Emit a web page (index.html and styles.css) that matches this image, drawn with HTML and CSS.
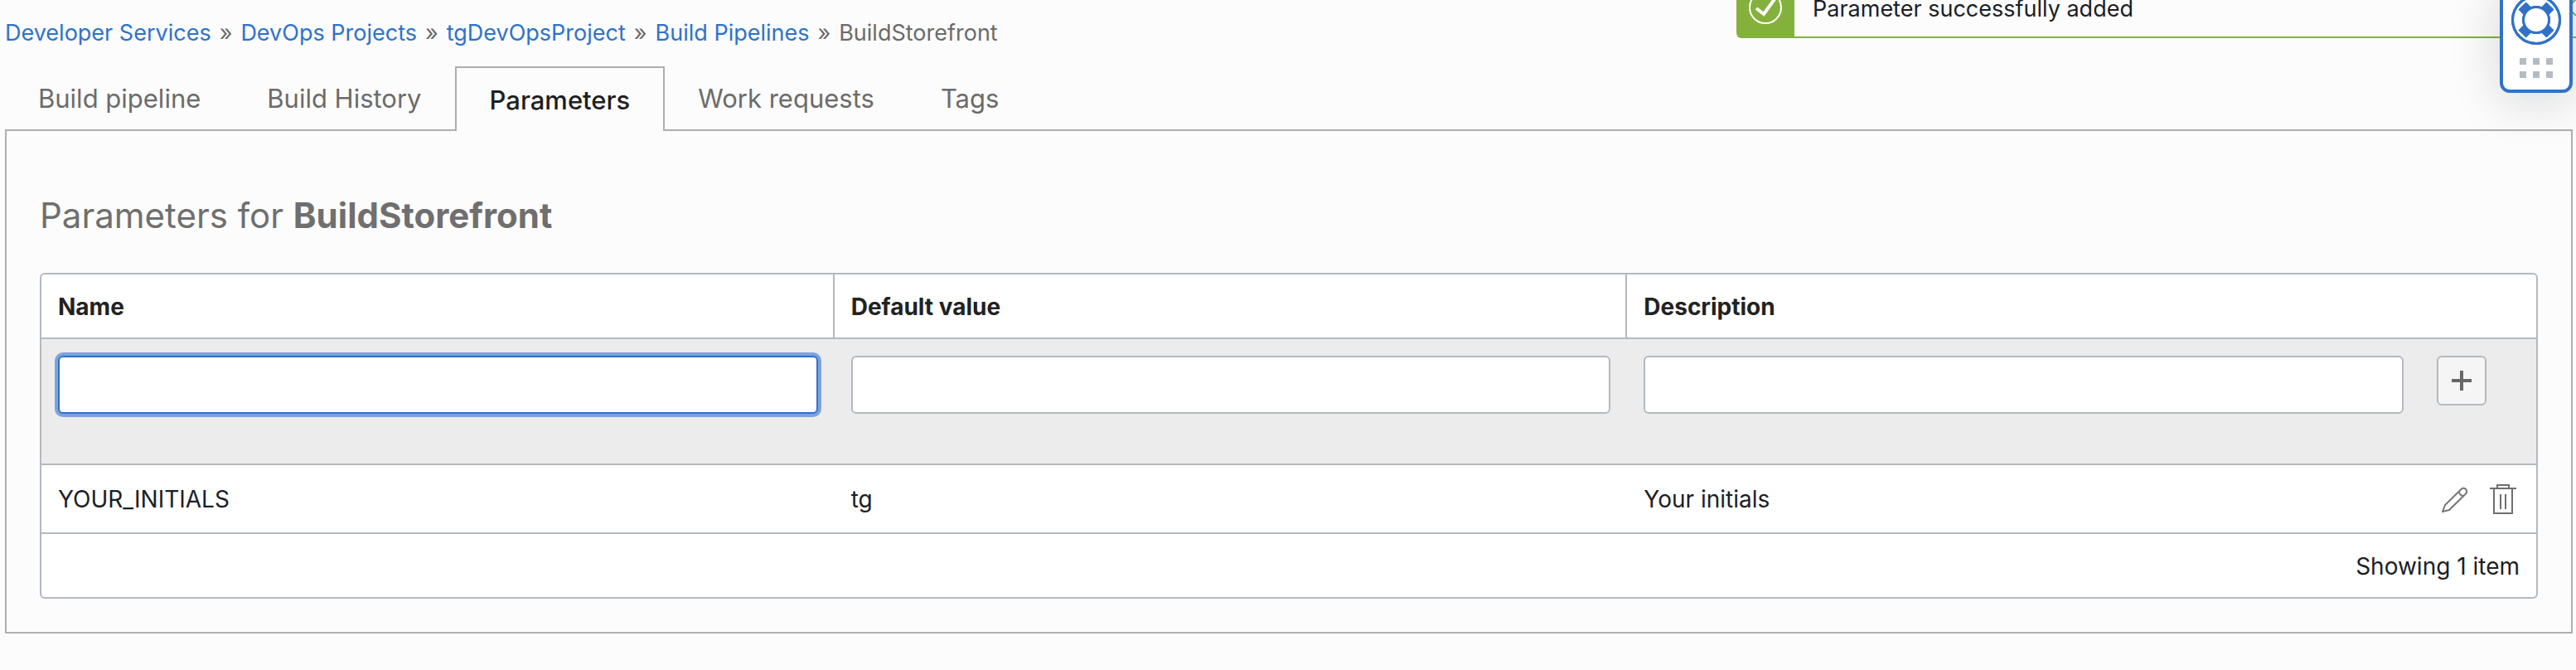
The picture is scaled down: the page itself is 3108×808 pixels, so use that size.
FILE: index.html
```html
<!DOCTYPE html>
<html lang="en">
<head>
<meta charset="utf-8">
<title>Build pipeline parameters</title>
<link rel="stylesheet" href="styles.css">
</head>
<body>
<nav class="breadcrumb" aria-label="Breadcrumb">
  <a href="#">Developer Services</a> <span>»</span>
  <a href="#">DevOps Projects</a> <span>»</span>
  <a href="#">tgDevOpsProject</a> <span>»</span>
  <a href="#">Build Pipelines</a> <span>»</span>
  <span>BuildStorefront</span>
</nav>

<div class="tabs" role="tablist">
  <button class="tab" role="tab" type="button">Build pipeline</button>
  <button class="tab" role="tab" type="button">Build History</button>
  <button class="tab tab-active" role="tab" type="button" aria-selected="true">Parameters</button>
  <button class="tab" role="tab" type="button">Work requests</button>
  <button class="tab" role="tab" type="button">Tags</button>
</div>

<main class="panel">
  <h1 class="title">Parameters for <strong>BuildStorefront</strong></h1>
  <table class="grid">
    <colgroup><col><col><col><col class="col-actions"></colgroup>
    <thead>
      <tr>
        <th scope="col" id="h-name">Name</th>
        <th scope="col" id="h-value">Default value</th>
        <th scope="col" id="h-desc" colspan="2">Description</th>
      </tr>
    </thead>
    <tbody>
      <tr class="entry">
        <td><input class="field field-focused" type="text" aria-labelledby="h-name"></td>
        <td><input class="field" type="text" aria-labelledby="h-value"></td>
        <td><input class="field" type="text" aria-labelledby="h-desc"></td>
        <td>
          <button class="add" type="button" aria-label="Add parameter">
            <svg width="24" height="24" viewBox="0 0 24 24"><path d="M12 0v24M0 12h24" stroke="#666" stroke-width="4"/></svg>
          </button>
        </td>
      </tr>
      <tr class="item">
        <td>YOUR_INITIALS</td>
        <td>tg</td>
        <td>Your initials</td>
        <td>
          <div class="actions">
            <button class="icon" type="button" aria-label="Edit">
              <svg width="32" height="36" viewBox="0 0 32 36" fill="none" stroke="#777" stroke-width="2"><path d="M1 33 4 25 23.500 6A3.800 3.800 0 0 1 29 11.500L9 31Z"/><path d="M21 8.500A5 5 0 0 0 26.500 14"/></svg>
            </button>
            <button class="icon" type="button" aria-label="Delete">
              <svg width="32" height="36" viewBox="0 0 32 36" fill="none" stroke="#6f6f6f" stroke-width="2"><path d="M0 5H32M9 5V1H23V5M5 5V35H27V5M13 12V30M19 12V30"/></svg>
            </button>
          </div>
        </td>
      </tr>
    </tbody>
    <tfoot>
      <tr><td colspan="4">Showing 1 item</td></tr>
    </tfoot>
  </table>
</main>

<div class="toast" role="status">
  <div class="toast-mark">
    <svg width="40" height="40" viewBox="0 0 40 40" fill="none" stroke="#fff"><circle cx="20" cy="20" r="19" stroke-width="2"/><path d="M9 21 18 28 31 10" stroke-width="4"/></svg>
  </div>
  <p class="toast-text">Parameter successfully added</p>
  <button class="toast-close" type="button" aria-label="Close">
    <svg width="20" height="20" viewBox="0 0 20 20"><path d="M0 0 20 20M20 0 0 20" stroke="#84b13c" stroke-width="2"/></svg>
  </button>
</div>

<button class="help" type="button" aria-label="Help">
  <svg width="60" height="60" viewBox="0 0 60 60">
    <circle cx="30" cy="30" r="30" fill="#3172c8"/>
    <circle cx="30" cy="30" r="22" fill="none" stroke="#fff" stroke-width="10"/>
    <path d="M13 13 47 47M47 13 13 47" stroke="#3172c8" stroke-width="13"/>
    <circle cx="30" cy="30" r="28.500" fill="none" stroke="#3172c8" stroke-width="3"/>
    <circle cx="30" cy="30" r="15.500" fill="#fff" stroke="#3172c8" stroke-width="3"/>
  </svg>
  <svg width="40" height="24" viewBox="0 0 40 24"><path d="M0 0h8v8H0zM16 0h8v8h-8zM32 0h8v8h-8zM0 16h8v8H0zM16 16h8v8h-8zM32 16h8v8h-8z" fill="#b6bac1"/></svg>
</button>
</body>
</html>
```

FILE: styles.css
```css
* { box-sizing: border-box; }

body {
  position: relative;
  margin: 0;
  overflow-x: hidden;
  background: #fcfcfc;
  color: #1b2026;
  font: 28px/40px Inter, "Noto Sans", sans-serif;
}

button {
  margin: 0;
  padding: 0;
  border: 0;
  background: none;
  color: inherit;
  font: inherit;
}

svg { display: block; }

.breadcrumb {
  display: flex;
  flex-wrap: wrap;
  gap: 10px;
  padding: 20px 6px;
  color: #6b6b6b;
  font-size: 27px;
}

.breadcrumb a {
  color: #2e72ca;
  text-decoration: none;
}

.tabs {
  display: flex;
  padding: 0 6px;
}

.tab {
  height: 76px;
  padding: 2px 40px 0;
  color: #6b6b6b;
  font-size: 31px;
}

.tab-active {
  position: relative;
  height: 78px;
  margin-bottom: -2px;
  border: 2px solid #aeaeae;
  border-bottom: 0;
  background: #fcfcfc;
  color: #1f1f1f;
  font-weight: 500;
}

.panel {
  margin: 0 4px 0 6px;
  padding: 72px 40px 40px;
  border: 2px solid #aeaeae;
}

.title {
  margin: 0 0 39px;
  color: #6f6f6f;
  font: 400 42px/60px Inter, "Noto Sans", sans-serif;
}

.grid {
  width: 100%;
  border: 2px solid #b4b9bf;
  border-radius: 6px;
  border-spacing: 0;
  table-layout: fixed;
  background: #fff;
}

.col-actions { width: 140px; }

.grid th,
.grid td {
  padding: 2px 20px 0;
  border-bottom: 2px solid #b4b9bf;
  text-align: left;
}

.grid th {
  height: 78px;
  border-right: 2px solid #b4b9bf;
  color: #222;
  font-weight: 700;
}

.grid th:last-child { border-right: 0; }

.grid .entry td {
  height: 152px;
  padding-top: 20px;
  background: #ececec;
  vertical-align: top;
}

.field {
  display: block;
  width: 100%;
  height: 70px;
  padding: 0 16px;
  border: 2px solid #b4b9bf;
  border-radius: 6px;
  background: #fff;
  font: inherit;
}

.field-focused {
  border-color: #2f72ca;
  box-shadow: 0 0 0 4px #7da3dc;
  outline: 0;
}

.add {
  display: grid;
  place-items: center;
  width: 60px;
  height: 60px;
  border: 2px solid #b4b9bf;
  border-radius: 6px;
  background: #f5f5f5;
}

.grid .item td {
  height: 83px;
  padding-top: 0;
}

.actions {
  display: flex;
  justify-content: flex-end;
  gap: 26px;
  margin-right: 4px;
}

.grid tfoot td {
  height: 76px;
  border-bottom: 0;
  text-align: right;
}

.toast {
  position: absolute;
  top: -26px;
  right: -24px;
  left: 2095px;
  display: flex;
  align-items: center;
  height: 72px;
  border-bottom: 2px solid #84b13c;
  border-radius: 6px;
  background: #fcfcfc;
}

.toast-mark {
  display: grid;
  place-items: center;
  width: 70px;
  height: 72px;
  border-radius: 6px 0 0 6px;
  background: #84b13c;
}

.toast-text {
  flex: 1;
  margin: 0;
  padding: 4px 0 0 22px;
  font-size: 27px;
}

.toast-close { margin-right: 24px; }

.help {
  position: absolute;
  top: -20px;
  right: 4px;
  display: flex;
  flex-direction: column;
  align-items: center;
  gap: 16px;
  width: 88px;
  height: 132px;
  padding-top: 10px;
  border: 4px solid #3172c8;
  border-radius: 12px;
  background: #fff;
  box-shadow: 0 8px 60px rgba(0, 20, 30, 0.16);
}
```
